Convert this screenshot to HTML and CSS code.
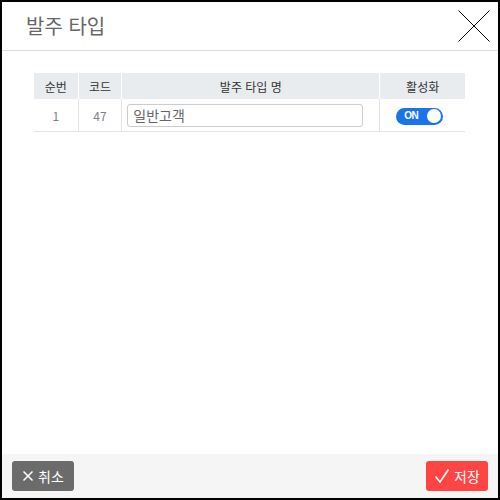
FILE: index.html
```html
<!DOCTYPE html>
<html lang="ko">
<head>
<meta charset="utf-8">
<link rel="stylesheet" href="styles.css">
</head>
<body>
<div class="modal">
  <div class="modal-header">
    <h1 class="title">발주 타입</h1>
    <button class="close" aria-label="닫기">
      <svg width="32" height="32" viewBox="0 0 32 32"><path d="M0.5 0.5 L31.5 31.5 M31.5 0.5 L0.5 31.5" stroke="#000" stroke-width="1" fill="none"/></svg>
    </button>
  </div>
  <div class="modal-body">
    <table class="grid">
      <thead>
        <tr>
          <th class="c-no">순번</th>
          <th class="c-code">코드</th>
          <th class="c-name">발주 타입 명</th>
          <th class="c-act">활성화</th>
        </tr>
      </thead>
      <tbody>
        <tr>
          <td>1</td>
          <td>47</td>
          <td class="name-cell"><input class="name-input" type="text" value="일반고객"></td>
          <td><span class="toggle"><span class="toggle-label">ON</span><span class="knob"></span></span></td>
        </tr>
      </tbody>
    </table>
  </div>
  <div class="modal-footer">
    <button class="btn btn-cancel">
      <svg width="12" height="12" viewBox="0 0 12 12"><path d="M1.5 1.5 L10.5 10.5 M10.5 1.5 L1.5 10.5" stroke="#fff" stroke-width="1.5" fill="none"/></svg>
      <span>취소</span>
    </button>
    <button class="btn btn-save">
      <svg width="16" height="16" viewBox="0 0 16 16"><path d="M1.5 8.5 L6 14 L14.5 1.5" stroke="#fff" stroke-width="1.6" fill="none"/></svg>
      <span>저장</span>
    </button>
  </div>
</div>
</body>
</html>
```

FILE: styles.css
```css
html, body {
  margin: 0;
  padding: 0;
  background: #fff;
}
body {
  font-family: "Noto Sans CJK KR", "Noto Sans", sans-serif;
}
.modal {
  width: 500px;
  height: 500px;
  box-sizing: border-box;
  border: 2px solid #000;
  display: flex;
  flex-direction: column;
  background: #fff;
}
.modal-header {
  height: 48px;
  border-bottom: 1px solid #dcdcdc;
  display: flex;
  align-items: center;
  justify-content: space-between;
  padding: 0 8px 0 24px;
  flex: none;
}
.title {
  margin: 0;
  font-size: 20px;
  font-weight: 400;
  color: #666;
  line-height: 1;
}
.close {
  border: 0;
  background: none;
  padding: 0;
  width: 32px;
  height: 32px;
  display: block;
}
.close svg { display: block; }
.modal-body {
  flex: 1;
  padding: 22px 33px 0 32px;
}
.grid {
  width: 100%;
  border-collapse: collapse;
  font-size: 12px;
}
.grid th {
  background: #e9ecef;
  color: #333;
  font-weight: 400;
  height: 26px;
  padding: 0;
  border-right: 1px solid #fff;
  text-align: center;
}
.grid th:last-child { border-right: 0; }
.grid td {
  height: 32px;
  padding: 0;
  color: #808080;
  text-align: center;
  border-right: 1px solid #e3e3e3;
  border-bottom: 1px solid #e3e3e3;
}
.grid td:last-child { border-right: 0; }
.c-no { width: 44px; }
.c-code { width: 43px; }
.c-act { width: 85px; }
.name-cell {
  text-align: left;
  padding: 0 16px 0 5px !important;
}
.name-input {
  display: block;
  box-sizing: border-box;
  width: 236px;
  height: 23px;
  border: 1px solid #ccc;
  border-radius: 3px;
  padding: 0 5px;
  font-family: "Noto Sans CJK KR", sans-serif;
  font-size: 14px;
  color: #666;
  background: #fff;
}
.toggle {
  display: inline-flex;
  align-items: center;
  justify-content: space-between;
  width: 47px;
  height: 17px;
  box-sizing: border-box;
  border-radius: 9px;
  background: #1a73e8;
  padding: 0 2px 0 8px;
  vertical-align: middle;
  margin-right: 6px;
}
.toggle-label {
  color: #fff;
  font-family: "Liberation Sans", Arial, sans-serif;
  font-size: 10px;
  font-weight: 700;
  letter-spacing: -0.5px;
  line-height: 1;
}
.knob {
  width: 14px;
  height: 14px;
  border-radius: 50%;
  background: #fff;
}
.modal-footer {
  flex: none;
  height: 44px;
  box-sizing: border-box;
  background: #f5f5f5;
  padding: 7px 10px;
  display: flex;
  justify-content: space-between;
  align-items: flex-start;
}
.btn {
  height: 30px;
  width: 62px;
  border: 0;
  border-radius: 3px;
  color: #fff;
  font-family: "Noto Sans CJK KR", sans-serif;
  font-size: 14px;
  display: inline-flex;
  align-items: center;
  justify-content: center;
  gap: 4px;
  padding: 0;
}
.btn svg { display: block; }
.btn-cancel { background: #6b6b6b; }
.btn-save { background: #ff4444; }
```
